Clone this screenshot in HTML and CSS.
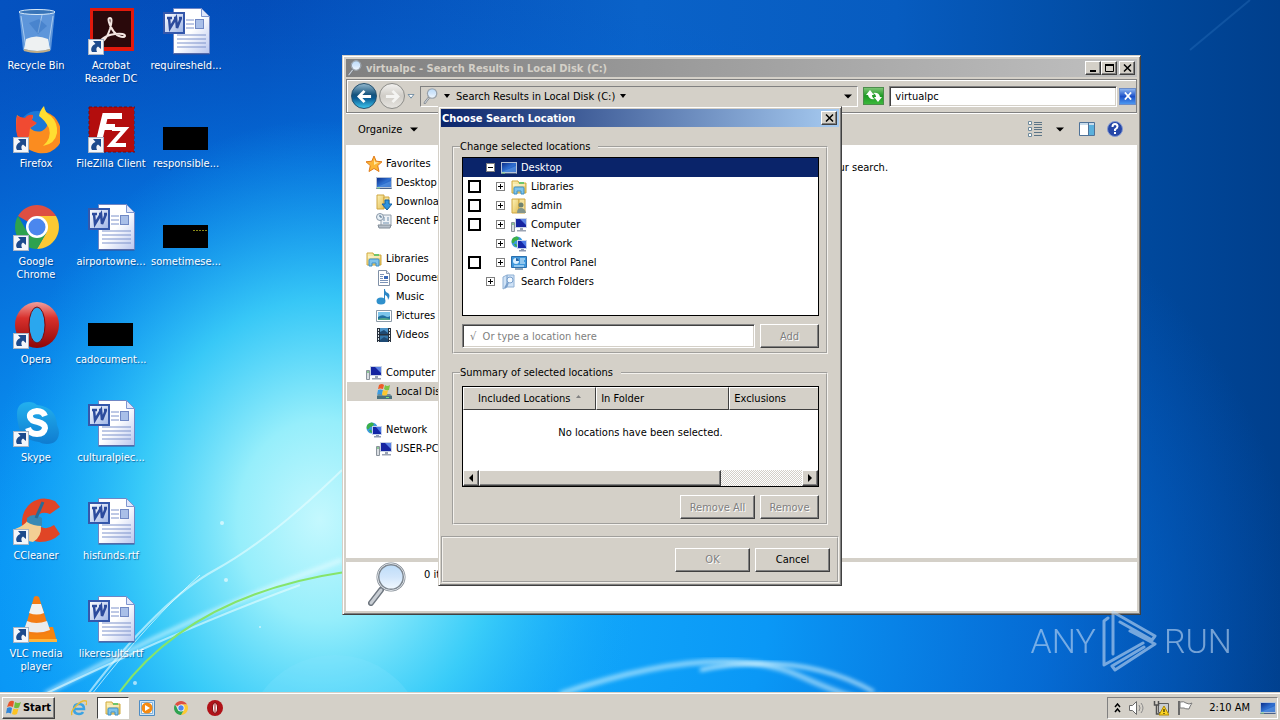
FILE: index.html
```
<!DOCTYPE html>
<html lang="en">
<head>
  <meta charset="UTF-8">
  <title>Desktop</title>
  <link rel="stylesheet" href="styles.css">
</head>

<body>

<!-- shared icons -->
<svg class="defs" aria-hidden="true">
  <defs>
    <linearGradient id="gPaper" x1="0" y1="0" x2="1" y2="1"><stop offset="0.5" stop-color="#fff"/><stop offset="1" stop-color="#b9c6ee"/></linearGradient>
    <linearGradient id="gBadge" x1="0" y1="0" x2="1" y2="1"><stop offset="0" stop-color="#fff"/><stop offset="1" stop-color="#9db4e6"/></linearGradient>
    <linearGradient id="gScreen" x1="0" y1="0" x2="1" y2="1"><stop offset="0" stop-color="#0b2f8c"/><stop offset="0.5" stop-color="#2f6fd0"/><stop offset="1" stop-color="#2354b4"/></linearGradient>
    <linearGradient id="gOpera" x1="0" y1="0" x2="0" y2="1"><stop offset="0" stop-color="#f0a09c"/><stop offset="0.35" stop-color="#d8302c"/><stop offset="1" stop-color="#8e0606"/></linearGradient>
    <linearGradient id="gFolder" x1="0" y1="0" x2="1" y2="1"><stop offset="0" stop-color="#fdf3b8"/><stop offset="1" stop-color="#e2bd55"/></linearGradient>
    <linearGradient id="gLens" x1="0" y1="0" x2="0" y2="1"><stop offset="0" stop-color="#bcdcf8"/><stop offset="0.5" stop-color="#d2e6fb"/><stop offset="1" stop-color="#f4faff"/></linearGradient>
    <linearGradient id="gSkype" x1="0" y1="0" x2="0" y2="1"><stop offset="0" stop-color="#22b0ee"/><stop offset="1" stop-color="#0f7cd0"/></linearGradient>

    <symbol id="arrow" viewBox="0 0 16 16">
      <rect x="0.5" y="0.5" width="15" height="15" fill="#f4f6fa" stroke="#a9b4c4"/>
      <path d="M5 2h8v8l-3-2.500c-2 1-2 3-1 5.500H4C2 10 4 6 7.500 5z" fill="#1d4a8c"/>
    </symbol>
    <symbol id="word" viewBox="0 0 48 48">
      <path d="M11.500 0.500h28l8 8v37h-36z" fill="url(#gPaper)" stroke="#6f86c4"/>
      <path d="M47.500 46h-36" stroke="#3c4f8f"/>
      <path d="M39.500 0.500v8h8z" fill="#dfe7fb" stroke="#7f95cf"/>
      <path d="M24 12h8M24 16h8M24 20h8M15 27h29M15 31h29M15 35h29M15 39h29" stroke="#7c92cb"/>
      <rect x="33.500" y="11.500" width="8" height="9" fill="#a9bfe8" stroke="#7088c4"/>
      <rect x="2" y="5" width="20" height="20" fill="url(#gBadge)" stroke="#3558ab" stroke-width="2"/>
      <path d="M5 10h5M12 10h3M17 10h3M7 10l1 10L14 10l1 10L19 10" fill="none" stroke="#2c4b9d" stroke-width="2.500"/>
    </symbol>
    <symbol id="chrome" viewBox="0 0 44 44">
      <path d="M22 22L3 11A22 22 0 0 1 41 11H22z" fill="#dd4f43"/>
      <path d="M22 11h19A22 22 0 0 1 22 44L31.500 27.500z" fill="#fcc934"/>
      <path d="M3 11A22 22 0 0 0 22 44L31.500 27.500 12.500 27.500z" fill="#2ea24f"/>
      <circle cx="22" cy="22" r="11" fill="#fff"/>
      <circle cx="22" cy="22" r="8.500" fill="#4b87ee"/>
    </symbol>
    <symbol id="opera" viewBox="0 0 44 46">
      <ellipse cx="22" cy="23" rx="22" ry="23" fill="url(#gOpera)"/>
      <ellipse cx="22" cy="23" rx="8" ry="18" fill="#2aa7ee" stroke="#7c0a0a"/>
    </symbol>
    <symbol id="opera-s" viewBox="0 0 16 16">
      <circle cx="8" cy="8" r="8" fill="#b01218"/>
      <ellipse cx="8" cy="8" rx="2.500" ry="5.500" fill="#fff" stroke="#7c0a0a"/>
      <path d="M8 3v10" stroke="#a01014"/>
    </symbol>
    <symbol id="screen" viewBox="0 0 16 16">
      <path d="M0 2h16v12H0z" fill="#b6c3d8"/>
      <path d="M1 3h14v9H1z" fill="url(#gScreen)"/>
      <path d="M1 12L15 6v6z" fill="#5f9be6" opacity="0.600"/>
      <path d="M0.500 13.500h15" stroke="#4c6186"/>
      <path d="M1 13h3" stroke="#8ee08a"/>
    </symbol>
    <symbol id="library" viewBox="0 0 16 16">
      <path d="M1 2h6l1 2h7v10H1z" fill="url(#gFolder)" stroke="#d0a93f"/>
      <path d="M8 3h5v2H8z" fill="#6fc56a"/>
      <path d="M2 6h12" stroke="#fffbe0"/>
      <path d="M3 15V9q0-1 1-1h8q1 0 1 1v6h-3v-3H6v3z" fill="#7fc3ea" stroke="#3f8fc6"/>
    </symbol>
    <symbol id="download" viewBox="0 0 16 16">
      <path d="M1 1h7v14H1z" fill="url(#gFolder)" stroke="#cfa640"/>
      <path d="M8 3h5v11H8z" fill="#f4e094" stroke="#cfa640"/>
      <path d="M9 6h4v4h3l-5 6-5-6h3z" fill="#2f94dd" stroke="#1462a6"/>
    </symbol>
    <symbol id="recent" viewBox="0 0 16 16">
      <path d="M5 2h10v11H5z" fill="#eef2f6" stroke="#93a0ad"/>
      <path d="M7 5h2M11 5h2M7 7h2M11 7h2M7 10h6" stroke="#6f8fae"/>
      <path d="M2 12h13l-1 3H3z" fill="#b7c0ca" stroke="#828d98"/>
      <circle cx="4" cy="4" r="3.500" fill="#e8f0f6" stroke="#8896a6"/>
      <path d="M4 2v2h2" fill="none" stroke="#4c6a86"/>
    </symbol>
    <symbol id="docs" viewBox="0 0 16 16">
      <path d="M2.500 0.500h8l3 3v12h-11z" fill="#fff" stroke="#8090a6"/>
      <path d="M10.500 0.500v3h3" fill="#dde6f4" stroke="#8090a6"/>
      <path d="M4 4.500h4M4 6.500h3M4 8.500h3M4 10.500h8M4 12.500h8" stroke="#7b93b8"/>
      <path d="M8 6h4v3H8z" fill="#3869b8"/>
    </symbol>
    <symbol id="music" viewBox="0 0 16 16">
      <ellipse cx="5" cy="12" rx="4.500" ry="3.500" fill="#2f90cc"/>
      <path d="M8 12V0h1q0 3 3 4 3 2 0 7 0-4-3-5v6z" fill="#2c86c6"/>
    </symbol>
    <symbol id="picture" viewBox="0 0 16 16">
      <path d="M0.500 2.500h15v11H0.500z" fill="#fff" stroke="#8b9aa8"/>
      <path d="M2 4h12v8H2z" fill="#7cc5ea"/>
      <path d="M2 9q4-3 7-1t5 0v4H2z" fill="#216fa0"/>
      <path d="M2 11q6-2 12 0v1H2z" fill="#54a58a"/>
    </symbol>
    <symbol id="video" viewBox="0 0 16 16">
      <path d="M1 1h14v14H1z" fill="#26303c"/>
      <path d="M4 1h8v6H4z" fill="#4d93c8"/><path d="M4 8.500h8V15H4z" fill="#3577aa"/>
      <path d="M4 5l4-2 4 3v1H4zM4 13l4-3 4 2v3H4z" fill="#1d4a74"/>
      <path d="M2.500 2v13M13.500 2v13" stroke="#dfe6ec" stroke-dasharray="2 1"/>
    </symbol>
    <symbol id="computer" viewBox="0 0 16 16">
      <path d="M0.500 5.500h3v9h-3z" fill="#d9dde2" stroke="#8b939c"/>
      <path d="M1 7h2" stroke="#3fae4a"/>
      <path d="M4 1h12v10H4z" fill="#c8d2e4"/>
      <path d="M5 2h10v8H5z" fill="#1524a0"/>
      <path d="M9 2h6v6z" fill="#5b82e4"/>
      <path d="M9 11h3v2H9zM6 13h9v1.500H6z" fill="#9ba4b4"/>
    </symbol>
    <symbol id="network" viewBox="0 0 16 16">
      <circle cx="6" cy="6" r="5.500" fill="#3b9ae0"/>
      <path d="M2 2q4-3 6 0-1 3-4 3-1 3-3 2Q0 4 2 2zM3 8q3-1 3 3-2 0-3-3z" fill="#3cb04a"/>
      <path d="M6 4h10v9H6z" fill="#c5d2ee"/><path d="M7 5h8v7H7z" fill="#1428a8"/>
      <path d="M10 5h5v6z" fill="#4a78e6"/><path d="M10 13h3v1h2v1.500H8V14h2z" fill="#8e9ab4"/>
    </symbol>
    <symbol id="user" viewBox="0 0 16 16">
      <path d="M1 1h7v14H1z" fill="url(#gFolder)" stroke="#cfa640"/>
      <path d="M8 1h6v14H8z" fill="#f5e29a" stroke="#cfa640"/>
      <circle cx="10" cy="7" r="2.500" fill="#6f8270"/><path d="M6 15q0-5 4-5t5 5z" fill="#83958c"/>
    </symbol>
    <symbol id="panel" viewBox="0 0 16 16">
      <path d="M0.500 1.500h15v11h-15z" fill="#3f98dc" stroke="#2a6fae"/>
      <circle cx="5" cy="6" r="3" fill="#d9efff"/><path d="M5 6V3a3 3 0 0 1 3 3z" fill="#2466a8"/>
      <path d="M9 4h5M9 6h4M9 8h5M3 11h10" stroke="#e8f6ff"/>
      <path d="M4 13h8v2H4z" fill="#8ea4b8"/>
    </symbol>
    <symbol id="searchf" viewBox="0 0 16 16">
      <path d="M2 3l4-2v12l-4 2zM6 1h7v12H6z" fill="#cfe2f6" stroke="#8fb0d4"/>
      <circle cx="9" cy="6" r="3" fill="#f2f9ff" stroke="#7aa0cc"/>
      <path d="M7 9l-3 5" stroke="#7aa0cc" stroke-width="2"/>
    </symbol>
    <symbol id="disk" viewBox="0 0 16 16">
      <path d="M2 10h12l2 2v3H1v-3z" fill="#6d8c98"/><path d="M1 12h15v3H1z" fill="#48707e"/>
      <path d="M3 1q3-2 5 0L7 5Q4 4 2 5z" fill="#ee5b27"/><path d="M9 1q2 2 5 0l-1 5q-3 1-5-1z" fill="#7cc343"/>
      <path d="M2 6q2-1 5 0l-1 5q-3-2-5 0z" fill="#3b9be0"/><path d="M7 6q3 1 5 0l-1 5q-2 1-5 0z" fill="#fcc62e"/>
      <path d="M10 13.500h3" stroke="#7be07b"/>
    </symbol>
    <symbol id="star" viewBox="0 0 16 16">
      <path d="M8 0l2.200 5.200L16 5.800l-4.300 3.800L13 15.500 8 12.500l-5 3 1.300-5.900L0 5.800l5.800-.6z" fill="#fcb535" stroke="#e07c1c"/>
      <path d="M8 3l1.300 3.300H13L8 9z" fill="#ffe9a6"/>
    </symbol>
    <symbol id="lens" viewBox="0 0 40 44">
      <path d="M13 28L3 41" stroke="#6f7780" stroke-width="6" stroke-linecap="round"/>
      <path d="M13 28L3 41" stroke="#c9ced4" stroke-width="3" stroke-linecap="round"/>
      <circle cx="23" cy="15" r="13" fill="url(#gLens)" stroke="#7d868f" stroke-width="3"/>
      <circle cx="23" cy="15" r="13.500" fill="none" stroke="#dfe3e8"/>
    </symbol>
    <symbol id="flagwin" viewBox="0 0 16 16">
      <path d="M3 2q3-2 5-0.500L7 7Q4 5.500 1 7z" fill="#e8552a"/>
      <path d="M9 2q3 2 6 0l-2 5.500q-3 1.500-5 0z" fill="#74bd3c"/>
      <path d="M1 8q3-1.500 5 0l-1 5.500q-3-1.500-5 0z" fill="#2f86d8"/>
      <path d="M7.500 8.500q3 1.500 5 0L11 14q-2.500 1.500-5 0z" fill="#fcc322"/>
    </symbol>
  </defs>
</svg>

<div class="desktop">

  <svg class="wallpaper" viewBox="0 0 1280 720" preserveAspectRatio="none" aria-hidden="true">
    <defs>
      <linearGradient id="wBase" x1="0" y1="0" x2="1" y2="0">
        <stop offset="0" stop-color="#0452c0"/><stop offset="0.2" stop-color="#034cb8"/>
        <stop offset="0.5" stop-color="#0a62c8"/><stop offset="0.7" stop-color="#075cc0"/>
        <stop offset="0.9" stop-color="#00489c"/><stop offset="1" stop-color="#003f8c"/>
      </linearGradient>
      <radialGradient id="wBlue" gradientUnits="userSpaceOnUse" cx="0" cy="0" r="1" gradientTransform="translate(380 620) scale(920 640)">
        <stop offset="0" stop-color="#18b4ff"/><stop offset="0.42" stop-color="#0a98f6"/>
        <stop offset="0.72" stop-color="#0672de" stop-opacity="0.800"/><stop offset="1" stop-color="#0560d0" stop-opacity="0"/>
      </radialGradient>
      <radialGradient id="wGlow" gradientUnits="userSpaceOnUse" cx="0" cy="0" r="1" gradientTransform="translate(320 520) scale(330 400)">
        <stop offset="0" stop-color="#c4f8fe"/><stop offset="0.25" stop-color="#96eefb"/>
        <stop offset="0.55" stop-color="#40d2f8" stop-opacity="0.850"/><stop offset="1" stop-color="#12a4f6" stop-opacity="0"/>
      </radialGradient>
      <filter id="soft"><feGaussianBlur stdDeviation="2"/></filter>
    </defs>
    <rect width="1280" height="720" fill="url(#wBase)"/>
    <rect width="1280" height="720" fill="url(#wBlue)"/>
    <rect width="1280" height="720" fill="url(#wGlow)"/>
    <circle cx="335" cy="745" r="90" fill="#8ae6ff" opacity="0.200"/>
    <g fill="none" stroke="#e8fdff">
      <path d="M45 694Q190 615 342 560" stroke-width="4" opacity="0.700" filter="url(#soft)"/>
      <path d="M45 694Q190 625 300 585" stroke-width="2" opacity="0.600"/>
      <path d="M88 694Q160 600 215 570T342 470" stroke-width="2" opacity="0.600"/>
      <path d="M92 694Q150 620 200 575" stroke-width="1" opacity="0.700"/>
      <path d="M560 694Q720 640 800 676T880 694" stroke-width="5" opacity="0.600" filter="url(#soft)"/>
      <path d="M700 670Q800 650 874 692" stroke-width="3" opacity="0.900" filter="url(#soft)"/>
      <path d="M1190 50L1250 0" stroke="#3f86d0" stroke-width="2" opacity="0.250"/>
    </g>
    <path d="M118 694Q190 595 345 572" fill="none" stroke="#86e46a" stroke-width="2"/>
    <g fill="#fff" opacity="0.600">
      <circle cx="222" cy="523" r="2"/><circle cx="226" cy="580" r="2"/><circle cx="135" cy="683" r="2"/><circle cx="260" cy="627" r="1"/>
    </g>
  </svg>

  <div class="shortcuts">
    <a class="shortcut" href="#">
      <svg viewBox="0 0 48 48"><path d="M7 3h36l-4 39q-14 5-28 0z" fill="#a8cdf0" opacity="0.550"/><path d="M14 31q10-5 22 0l2 10q-12 4-26 0z" fill="#eef1f2"/><path d="M12 42q13 4 26 0" stroke="#c3ae86" stroke-width="2" fill="none"/><ellipse cx="25" cy="4" rx="18" ry="2.500" fill="#3874b8" stroke="#d9ebfa"/><path d="M9 8l5 32M41 8l-5 32M30 7l-4 18" stroke="#d8ecfc" opacity="0.600"/><path d="M17 15l10-4 8 7-9 8z" fill="#2d6cbc" opacity="0.400"/></svg>
      <span>Recycle Bin</span></a>
    <a class="shortcut" href="#">
      <svg viewBox="0 0 48 48"><path d="M3 0h44v43H3z" fill="#e1190c"/><path d="M6 3h38v36H6z" fill="#2a090b"/><path d="M23 10q-3 0 0 7 4 9 9 11 5 2 6 0 0-3-10-2-9 1-14 6-1 3 2 1 4-3 7-12 3-11 0-11z" fill="none" stroke="#f4e6e2" stroke-width="2"/><use href="#arrow" x="1" y="31" width="16" height="16"/></svg>
      <span>Acrobat Reader DC</span></a>
    <a class="shortcut" href="#"><svg><use href="#word"/></svg><span>requiresheld...</span></a>

    <a class="shortcut" href="#">
      <svg viewBox="0 0 48 48"><circle cx="25" cy="23" r="18" fill="#1a78d8"/><path d="M5 9q3 3 8 4 3-4 8-4 0 4-2 5 5 2 5 4l-6 4q5 5 12 3 6-3 6-10l-2-9q9 3 13 12 6 14-1 22-8 9-20 7Q9 43 5 27 3 17 5 9z" fill="#fb8c1f"/><path d="M5 10q3 1 8 2 3-4 8-3l-1 5 5 3-7 5-1 8-8 7Q2 29 5 10z" fill="#f04a32"/><path d="M32 0q1 7 7 10 7 7 6 17-2 11-14 13 9-8 6-18-5-9-10-12 1-6 5-10z" fill="#ffdd31"/><use href="#arrow" x="1" y="31" width="16" height="16"/></svg>
      <span>Firefox</span></a>
    <a class="shortcut" href="#">
      <svg viewBox="0 0 48 48"><path d="M2 1h45v45H2z" fill="#b30d0d"/><path d="M2 1h46v45H2z" fill="none" stroke="#7e0808" stroke-dasharray="3 2"/><path d="M12 35L18 10h17M15 21h13" fill="none" stroke="#fff" stroke-width="6"/><path d="M25 23h13L24 39h15" fill="none" stroke="#fff" stroke-width="4"/><use href="#arrow" x="1" y="31" width="16" height="16"/></svg>
      <span>FileZilla Client</span></a>
    <a class="shortcut" href="#"><svg viewBox="0 0 48 48"><path d="M1 21h45v23H1z"/></svg><span>responsible...</span></a>

    <a class="shortcut" href="#">
      <svg viewBox="0 0 48 48"><use href="#chrome" x="3" y="1" width="44" height="44"/><use href="#arrow" x="1" y="31" width="16" height="16"/></svg>
      <span>Google Chrome</span></a>
    <a class="shortcut" href="#"><svg><use href="#word"/></svg><span>airportowne...</span></a>
    <a class="shortcut" href="#"><svg viewBox="0 0 48 48"><path d="M1 21h45v23H1z"/><path d="M31 26.500h14" stroke="#8a8a18" stroke-dasharray="2 1"/></svg><span>sometimese...</span></a>

    <a class="shortcut" href="#">
      <svg viewBox="0 0 48 48"><use href="#opera" x="3" y="0" width="44" height="46"/><use href="#arrow" x="1" y="31" width="16" height="16"/></svg>
      <span>Opera</span></a>
    <a class="shortcut" href="#"><svg viewBox="0 0 48 48"><path d="M1 21h45v23H1z"/></svg><span>cadocument...</span></a>
    <i></i>

    <a class="shortcut" href="#">
      <svg viewBox="0 0 48 48"><path d="M5 14Q5 2 17 2q5 0 8 3 19 2 20 20 2 4 2 8-1 11-12 11-5 0-8-2Q8 40 6 23q-1-4-1-9z" fill="url(#gSkype)"/><path d="M33 16q-2-5-8-5-8 1-7 6 1 4 8 5 7 2 7 6-1 6-8 6-7 0-9-6" fill="none" stroke="#fff" stroke-width="6"/><use href="#arrow" x="1" y="31" width="16" height="16"/></svg>
      <span>Skype</span></a>
    <a class="shortcut" href="#"><svg><use href="#word"/></svg><span>culturalpiec...</span></a>
    <i></i>

    <a class="shortcut" href="#">
      <svg viewBox="0 0 48 48"><path d="M48 9L43 3Q30-3 19 5 9 13 10 28q3 15 18 16 12 0 20-8l-6-9q-7 5-13 2-6-3-4-9 3-8 13-4z" fill="#e04526"/><path d="M3 31q9-3 13-9l13 5q1 12-8 17-10-1-18-13z" fill="#f3cf94"/><path d="M15 20q6-6 15 0v8q-9 0-15-4z" fill="#3889b4"/><path d="M24 20l7-16" stroke="#2a6b94" stroke-width="3"/><use href="#arrow" x="1" y="31" width="16" height="16"/></svg>
      <span>CCleaner</span></a>
    <a class="shortcut" href="#"><svg><use href="#word"/></svg><span>hisfunds.rtf</span></a>
    <i></i>

    <a class="shortcut" href="#">
      <svg viewBox="0 0 48 48"><path d="M10 31h31l4 15H9z" fill="#f58410"/><path d="M9 46h36v-3H10z" fill="#ffb53c"/><path d="M22 1q2-2 5 0l11 35q-13 6-26 0z" fill="#f47d15"/><path d="M20 8h9l3 9q-7 3-15 0z" fill="#f2f2f2"/><path d="M15 25q9 4 20 0l3 9q-13 5-26 0z" fill="#ececec"/><use href="#arrow" x="1" y="31" width="16" height="16"/></svg>
      <span>VLC media player</span></a>
    <a class="shortcut" href="#"><svg><use href="#word"/></svg><span>likeresults.rtf</span></a>
  </div>

  <!-- explorer window -->
  <section class="window explorer">
    <header class="titlebar inactive">
      <svg class="icon"><use href="#lens"/></svg>
      <h1>virtualpc - Search Results in Local Disk (C:)</h1>
      <button class="bevel caption" aria-label="Minimize"><svg viewBox="0 0 9 8"><path d="M1 7h6" stroke="#000" stroke-width="2"/></svg></button>
      <button class="bevel caption" aria-label="Maximize"><svg viewBox="0 0 9 8"><path d="M0.500 0v7.500h8V0" fill="none" stroke="#000"/><path d="M0 1h9" stroke="#000" stroke-width="2"/></svg></button>
      <button class="bevel caption close" aria-label="Close"><svg viewBox="0 0 9 8"><path d="M1 0.500l7 7M8 0.500L1 7.500" stroke="#000" stroke-width="1.500"/></svg></button>
    </header>

    <nav class="navbar">
      <button class="round back" aria-label="Back"><svg viewBox="0 0 16 16"><path d="M15 8H3M8 2L2 8l6 6" fill="none" stroke="#fff" stroke-width="3"/></svg></button>
      <button class="round forward" aria-label="Forward"><svg viewBox="0 0 16 16"><path d="M1 8h12M8 2l6 6-6 6" fill="none" stroke="#f4f4f2" stroke-width="3"/></svg></button>
      <button class="plain" aria-label="Recent pages"><svg class="caret" viewBox="0 0 8 6"><path d="M0.500 0.500h7L4 5z" fill="#fff" stroke="#5c7c96"/></svg></button>
      <div class="address">
        <svg class="icon"><use href="#lens"/></svg>
        <svg class="caret small" viewBox="0 0 7 4"><path d="M0 0h6L3 4z"/></svg>
        <a href="#">Search Results in Local Disk (C:)</a>
        <svg class="caret small" viewBox="0 0 7 4"><path d="M0 0h6L3 4z"/></svg>
        <button class="plain drop" aria-label="Previous locations"><svg class="caret" viewBox="0 0 8 4"><path d="M0 0h8L4 4z"/></svg></button>
      </div>
      <button class="refresh" aria-label="Refresh"><svg viewBox="0 0 18 16"><path d="M1 7l4-5 4 5H7q0 3 3 4-6 1-7-4zM17 9l-4 5-4-5h2q0-3-3-4 6-1 7 4z" fill="#fff"/></svg></button>
      <input class="sunken query" type="text" value="virtualpc" aria-label="Search">
      <button class="clear" aria-label="Clear search"><svg viewBox="0 0 9 8"><path d="M1 0l7 8M8 0L1 8" stroke="#fff" stroke-width="2"/></svg></button>
    </nav>

    <div class="toolbar">
      <button class="plain organize">Organize <svg class="caret" viewBox="0 0 8 4"><path d="M0 0h8L4 4z"/></svg></button>
      <button class="plain" aria-label="Change view"><svg class="icon" viewBox="0 0 16 16"><path d="M1.500 0.500h3v3h-3zM1.500 6.500h3v3h-3zM1.500 12.500h3v3h-3z" fill="#fff" stroke="#6e8a9c"/><path d="M7 1.500h8M7 3.500h8M7 6.500h8M7 8.500h8M7 11.500h8M7 14.500h8" stroke="#5c7486"/></svg></button>
      <button class="plain more" aria-label="More view options"><svg class="caret" viewBox="0 0 8 4"><path d="M0 0h8L4 4z"/></svg></button>
      <button class="plain preview" aria-label="Preview pane"><svg class="icon" viewBox="0 0 16 16"><path d="M0.500 1.500h15v13h-15z" fill="#fff" stroke="#4f7298"/><path d="M1 2h14v2H1z" fill="#c8dcec"/><path d="M10 4h5v10h-5z" fill="#5ab0dc"/><path d="M9.500 2v12" stroke="#4f7298"/></svg></button>
      <button class="plain" aria-label="Help"><svg class="icon" viewBox="0 0 16 16"><circle cx="8" cy="8" r="7.500" fill="#2647a8" stroke="#8298d0"/><path d="M5.500 6q0-3 2.500-3t2.500 2.500Q10.500 7 8 8.500V10M8 11v2" fill="none" stroke="#fff" stroke-width="2"/></svg></button>
    </div>

    <div class="content">
      <nav class="sidebar">
        <ul>
          <li class="head"><a href="#"><svg class="icon"><use href="#star"/></svg>Favorites</a></li>
          <li><a href="#"><svg class="icon"><use href="#screen"/></svg>Desktop</a></li>
          <li><a href="#"><svg class="icon"><use href="#download"/></svg>Downloads</a></li>
          <li><a href="#"><svg class="icon"><use href="#recent"/></svg>Recent Places</a></li>
        </ul>
        <ul>
          <li class="head"><a href="#"><svg class="icon"><use href="#library"/></svg>Libraries</a></li>
          <li><a href="#"><svg class="icon"><use href="#docs"/></svg>Documents</a></li>
          <li><a href="#"><svg class="icon"><use href="#music"/></svg>Music</a></li>
          <li><a href="#"><svg class="icon"><use href="#picture"/></svg>Pictures</a></li>
          <li><a href="#"><svg class="icon"><use href="#video"/></svg>Videos</a></li>
        </ul>
        <ul>
          <li class="head"><a href="#"><svg class="icon"><use href="#computer"/></svg>Computer</a></li>
          <li class="current"><a href="#"><svg class="icon"><use href="#disk"/></svg>Local Disk (C:)</a></li>
        </ul>
        <ul>
          <li class="head"><a href="#"><svg class="icon"><use href="#network"/></svg>Network</a></li>
          <li><a href="#"><svg class="icon"><use href="#computer"/></svg>USER-PC</a></li>
        </ul>
      </nav>
      <main class="results">No items match your search.</main>
    </div>

    <footer class="details">
      <svg class="big-lens"><use href="#lens"/></svg>
      <span>0 items</span>
    </footer>
  </section>

  <!-- search location dialog -->
  <section class="window dialog" role="dialog" aria-labelledby="dlgTitle">
    <header class="titlebar">
      <h2 id="dlgTitle">Choose Search Location</h2>
      <button class="bevel caption" aria-label="Close"><svg viewBox="0 0 9 8"><path d="M1 0.500l7 7M8 0.500L1 7.500" stroke="#000" stroke-width="1.500"/></svg></button>
    </header>

    <form class="dialog-body">
      <fieldset>
        <legend>Change selected locations</legend>
        <ul class="tree">
          <li class="selected"><span class="check"></span><button type="button" class="toggle minus" aria-label="Collapse"></button><svg class="icon"><use href="#screen"/></svg><span>Desktop</span></li>
          <li class="child"><span class="check"><input type="checkbox" id="c1"></span><button type="button" class="toggle" aria-label="Expand"></button><svg class="icon"><use href="#library"/></svg><label for="c1">Libraries</label></li>
          <li class="child"><span class="check"><input type="checkbox" id="c2"></span><button type="button" class="toggle" aria-label="Expand"></button><svg class="icon"><use href="#user"/></svg><label for="c2">admin</label></li>
          <li class="child"><span class="check"><input type="checkbox" id="c3"></span><button type="button" class="toggle" aria-label="Expand"></button><svg class="icon"><use href="#computer"/></svg><label for="c3">Computer</label></li>
          <li class="child"><span class="check"></span><button type="button" class="toggle" aria-label="Expand"></button><svg class="icon"><use href="#network"/></svg><span>Network</span></li>
          <li class="child"><span class="check"><input type="checkbox" id="c4"></span><button type="button" class="toggle" aria-label="Expand"></button><svg class="icon"><use href="#panel"/></svg><label for="c4">Control Panel</label></li>
          <li><span class="check"></span><button type="button" class="toggle" aria-label="Expand"></button><svg class="icon"><use href="#searchf"/></svg><span>Search Folders</span></li>
        </ul>
        <div class="row">
          <input class="sunken location" type="text" placeholder="√&nbsp; Or type a location here" aria-label="Location">
          <button type="button" class="bevel btn narrow" disabled>Add</button>
        </div>
      </fieldset>

      <fieldset>
        <legend>Summary of selected locations</legend>
        <div class="summary">
          <table>
            <thead>
              <tr>
                <th class="first">Included Locations <svg class="caret small" viewBox="0 0 7 4"><path d="M1 3h5L3.500 0z" fill="#808080"/></svg></th>
                <th>In Folder</th>
                <th class="last">Exclusions</th>
              </tr>
            </thead>
            <tbody>
              <tr><td colspan="3">No locations have been selected.</td></tr>
            </tbody>
          </table>
          <div class="scrollbar">
            <button type="button" class="bevel" aria-label="Scroll left"><svg viewBox="0 0 4 8"><path d="M4 0v8L0 4z"/></svg></button>
            <div class="track"><div class="bevel thumb"></div></div>
            <button type="button" class="bevel" aria-label="Scroll right"><svg viewBox="0 0 4 8"><path d="M0 0v8l4-4z"/></svg></button>
          </div>
        </div>
        <div class="row">
          <button type="button" class="bevel btn" disabled>Remove All</button>
          <button type="button" class="bevel btn narrow" disabled>Remove</button>
        </div>
      </fieldset>

      <div class="actions">
        <button type="submit" class="bevel btn" disabled>OK</button>
        <button type="button" class="bevel btn">Cancel</button>
      </div>
    </form>
  </section>

  <div class="watermark">
    <span>ANY</span>
    <svg viewBox="0 0 60 66"><path d="M8 10L4 13V57L43 35M13 46V4L55 28L52 32L20 14M30 23L55 36L15 62L12 58L44 39" fill="none" stroke="#c2daf4" stroke-width="3" stroke-linejoin="round" stroke-linecap="round"/></svg>
    <span>RUN</span>
  </div>
</div>

<footer class="taskbar">
  <button class="bevel start"><svg><use href="#flagwin"/></svg>Start</button>
  <div class="quick">
    <button class="plain" aria-label="Internet Explorer"><svg class="icon" viewBox="0 0 16 16"><path d="M3 9h10q0-5-5-5t-5 5 5 5q3 0 4-2" fill="none" stroke="#3ba3e4" stroke-width="2.500"/><path d="M1 15q-2-3 4-9t10-5q2 1 0 4" fill="none" stroke="#e9bb32" stroke-width="1.500"/></svg></button>
    <button class="active" aria-label="Explorer"><svg class="icon"><use href="#library"/></svg></button>
    <button class="plain" aria-label="Media Player"><svg class="icon" viewBox="0 0 16 16"><path d="M0.500 0.500h15v15h-15z" fill="#cfe4f6" stroke="#4d8cc4"/><path d="M2.500 2.500h11v11h-11z" fill="#fff" stroke="#7fb2dc"/><circle cx="8" cy="8" r="5.500" fill="#f58a12"/><path d="M6 5l5 3-5 3z" fill="#fff"/></svg></button>
    <button class="plain" aria-label="Chrome"><svg class="icon" viewBox="0 0 16 16"><use href="#chrome" x="1" y="1" width="14" height="14"/></svg></button>
    <button class="plain" aria-label="Opera"><svg class="icon"><use href="#opera-s"/></svg></button>
  </div>
  <div class="tray">
    <svg class="chev" viewBox="0 0 7 10"><path d="M1 4l2.500-3L6 4M1 9l2.500-3L6 9" fill="none" stroke="#000" stroke-width="1.500"/></svg>
    <svg class="icon" viewBox="0 0 16 16"><path d="M0.500 5.500h3l4-4v13l-4-4h-3z" fill="#fff" stroke="#6a6a6a"/><path d="M10 5q2 3 0 6M12 3q4 5 0 10" fill="none" stroke="#8a8a8a"/></svg>
    <svg class="icon" viewBox="0 0 16 16"><path d="M5.500 3.500h10v9h-10z" fill="#c8ccd0" stroke="#5c5c5c"/><path d="M1.500 1v4h4V1M3.500 5v9h4" fill="none" stroke="#505050" stroke-width="1.500"/><path d="M11 6l5 9H6z" fill="#fcd423" stroke="#b28a00"/><path d="M11 9v3M11 13v1" stroke="#000"/></svg>
    <svg class="icon" viewBox="0 0 16 16"><path d="M2 1v14" stroke="#6a6a6a" stroke-width="2"/><path d="M3 2q4-1 6 1 3 2 6 0-2 3-3 6-4 0-5-1H3z" fill="#fff" stroke="#7a7a7a"/></svg>
    <time>2:10 AM</time>
    <button class="plain" aria-label="Show desktop"><svg class="icon"><use href="#screen"/></svg></button>
  </div>
</footer>

</body>
</html>
```
FILE: styles.css
```
* {
  box-sizing: border-box;
}

html,
body {
  height: 100%;
  margin: 0;
}

body {
  display: flex;
  flex-direction: column;
  overflow: hidden;
  font: 11px/13px "DejaVu Sans Condensed", "DejaVu Sans", sans-serif;
  color: #000;
}

button,
input {
  font: inherit;
  color: inherit;
  margin: 0;
}

button {
  display: flex;
  align-items: center;
  justify-content: center;
  padding: 0;
}

a {
  color: inherit;
  text-decoration: none;
}

ul {
  list-style: none;
  margin: 0;
  padding: 0;
}

h1,
h2 {
  flex: 1;
  margin: 0;
  font: bold 11px/13px "DejaVu Sans Condensed", "DejaVu Sans", sans-serif;
  white-space: nowrap;
}

.defs {
  position: absolute;
  width: 0;
  height: 0;
}

.icon {
  width: 16px;
  height: 16px;
  flex: none;
}

.caret {
  width: 8px;
  height: 5px;
  flex: none;
}

.caret.small {
  width: 7px;
  height: 4px;
}

.plain {
  background: none;
  border: 0;
}

.bevel {
  background: #d4d0c8;
  border: 1px solid;
  border-color: #fff #404040 #404040 #fff;
  box-shadow: inset -1px -1px #808080;
}

.sunken {
  background: #fff;
  border: 1px solid;
  border-color: #808080 #fff #fff #808080;
  box-shadow: inset 1px 1px #404040, inset -1px -1px #d4d0c8;
  border-radius: 0;
  outline: 0;
}

/* desktop */
.desktop {
  position: relative;
  flex: 1;
  overflow: hidden;
}

.wallpaper {
  position: absolute;
  width: 100%;
  height: 100vh;
}

.shortcuts {
  position: relative;
  display: grid;
  grid-template-columns: repeat(3, 72px);
  grid-auto-rows: 98px;
  column-gap: 3px;
}

.shortcut {
  display: flex;
  flex-direction: column;
  align-items: center;
  gap: 3px;
  padding-top: 8px;
  color: #fff;
  text-align: center;
  text-shadow: 1px 1px 1px rgba(0, 40, 100, 0.6);
}

.shortcut svg {
  width: 48px;
  height: 48px;
  flex: none;
}

/* windows */
.window {
  position: absolute;
  display: flex;
  flex-direction: column;
  padding: 2px;
  background: #d4d0c8;
  border: 1px solid;
  border-color: #d4d0c8 #404040 #404040 #d4d0c8;
  box-shadow: inset 1px 1px #fff, inset -1px -1px #808080;
}

.explorer {
  left: 342px;
  right: 139px;
  top: 55px;
  bottom: 77px;
  padding: 3px;
}

.dialog {
  left: 438px;
  right: 438px;
  top: 106px;
}

.titlebar {
  display: flex;
  align-items: center;
  height: 18px;
  padding: 0 2px 0 1px;
  background: linear-gradient(90deg, #0a246a, #a6caf0);
  color: #fff;
  flex: none;
}

.titlebar.inactive {
  background: linear-gradient(90deg, #808080, #c0c0c0);
  color: #d4d0c8;
}

.titlebar .icon {
  margin-right: 3px;
}

.caption {
  width: 16px;
  height: 14px;
}

.caption.close {
  margin-left: 2px;
}

.caption svg {
  width: 9px;
  height: 8px;
}

/* explorer */
.navbar {
  display: flex;
  align-items: center;
  height: 34px;
  margin-top: 2px;
  padding: 0 0 0 4px;
  border: 1px solid #808080;
  box-shadow: inset 1px 1px #fff, 0 1px #fff;
  flex: none;
}

.round {
  width: 26px;
  height: 26px;
  border-radius: 50%;
  margin-right: 2px;
  flex: none;
}

.round svg {
  width: 15px;
  height: 15px;
}

.back {
  background: linear-gradient(#8fb6cc, #14527c 45%, #0c5c94 60%, #3cc4ec);
  border: 1px solid #24506e;
}

.forward {
  background: linear-gradient(#f2f1ef, #cfccc6 50%, #e6e4e0);
  border: 1px solid #8c8c88;
}

.address {
  display: flex;
  align-items: center;
  flex: 1;
  height: 21px;
  margin-left: 5px;
  padding: 0 5px 0 2px;
  gap: 5px;
  border: 1px solid;
  border-color: #808080 #fff #fff #808080;
}

.address .drop {
  margin-left: auto;
}

.refresh {
  width: 21px;
  height: 18px;
  margin: 0 5px;
  background: linear-gradient(#7cc474, #1d9a24 50%, #3cb83c);
  border: 1px solid #4c8c4c;
}

.refresh svg {
  width: 18px;
  height: 16px;
}

.query {
  width: 29%;
  height: 21px;
  padding: 0 5px;
}

.clear {
  width: 17px;
  height: 17px;
  margin-left: 2px;
  background: linear-gradient(#8cb4f0, #1c50c8 50%, #4c98f0);
  border: 1px solid #6c8cc8;
}

.clear svg {
  width: 8px;
  height: 8px;
}

.toolbar {
  display: flex;
  align-items: center;
  height: 32px;
  padding: 0 14px 0 12px;
  flex: none;
}

.organize {
  gap: 8px;
  margin-right: auto;
}

.more {
  margin: 0 15px 0 13px;
}

.preview {
  margin-right: 12px;
}

.content {
  display: flex;
  flex: 1;
  min-height: 0;
  background: #fff;
}

.sidebar {
  width: 156px;
  padding: 9px 0 0 1px;
  white-space: nowrap;
  overflow: hidden;
  flex: none;
}

.sidebar ul {
  margin-bottom: 19px;
}

.sidebar a {
  display: flex;
  align-items: center;
  gap: 4px;
  height: 19px;
  padding-left: 29px;
}

.sidebar .head a {
  padding-left: 19px;
}

.sidebar .current {
  background: #d4d0c8;
}

.results {
  flex: 1;
  padding: 16px 6px 0 0;
  text-align: center;
}

.details {
  display: flex;
  gap: 16px;
  height: 53px;
  padding: 0 22px;
  background: #fff;
  border-top: 4px solid #d4d0c8;
  flex: none;
}

.details span {
  padding-top: 6px;
}

.big-lens {
  width: 40px;
  height: 44px;
}

/* dialog */
.dialog-body {
  padding-top: 13px;
}

fieldset {
  min-width: 0;
  margin: 0 11px 12px;
  padding: 4px 7px 4px 8px;
  border: 2px groove #f4f2ee;
}

legend {
  margin-left: -2px;
  padding: 0 8px 0 0;
}

.tree {
  height: 159px;
  background: #fff;
  border: 1px solid #000;
}

.tree li {
  display: flex;
  align-items: center;
  height: 19px;
}

.tree .check {
  display: flex;
  width: 22px;
  padding-left: 5px;
}

.tree .selected {
  background: #0a246a;
  color: #fff;
}

.tree .child .toggle {
  margin-left: 11px;
}

.tree .icon {
  margin: 0 4px 0 6px;
}

.tree input {
  appearance: none;
  width: 13px;
  height: 13px;
  background: #fff;
  border: 2px solid #000;
}

/* plus / minus boxes */
.toggle {
  width: 9px;
  height: 9px;
  margin-left: 1px;
  border: 1px solid #808080;
  background:
    linear-gradient(#000, #000) center / 5px 1px no-repeat,
    linear-gradient(#000, #000) center / 1px 5px no-repeat,
    #fff;
}

.toggle.minus {
  background: linear-gradient(#000, #000) center / 5px 1px no-repeat, #fff;
}

.row {
  display: flex;
  justify-content: flex-end;
  gap: 5px;
  margin-top: 8px;
}

.location {
  flex: 1;
  min-width: 0;
  padding: 0 7px;
}

.location::placeholder {
  color: #808080;
  opacity: 1;
}

.btn {
  width: 75px;
  height: 24px;
}

.btn.narrow {
  width: 59px;
}

.btn:disabled {
  color: #808080;
  text-shadow: 1px 1px #fff;
}

.summary {
  display: flex;
  flex-direction: column;
  height: 101px;
  margin-top: 3px;
  background: #fff;
  border: 1px solid #000;
}

.summary table {
  width: 100%;
  table-layout: fixed;
  border-collapse: separate;
  border-spacing: 0;
}

.summary th {
  height: 23px;
  padding: 0 4px;
  background: #d4d0c8;
  border: 1px solid;
  border-color: #fff #404040 #404040 #fff;
  font-weight: normal;
  text-align: left;
  white-space: nowrap;
}

.summary .first {
  padding-left: 14px;
}

.summary .caret {
  margin: 0 0 3px 1px;
}

.summary .last {
  width: 25%;
  border-right: 0;
}

.summary td {
  padding: 16px 0 0;
  text-align: center;
}

.scrollbar {
  display: flex;
  height: 16px;
  margin-top: auto;
}

.scrollbar button {
  width: 16px;
}

.scrollbar svg {
  width: 4px;
  height: 8px;
}

.track {
  flex: 1;
  background: repeating-conic-gradient(#fff 0 25%, #d4d0c8 0 50%) 0 0 / 2px 2px;
}

.thumb {
  width: 75%;
  height: 100%;
}

.actions {
  display: flex;
  justify-content: flex-end;
  align-items: center;
  gap: 5px;
  height: 47px;
  padding: 0 7px;
  margin-top: -1px;
  border: 2px groove #f4f2ee;
}

/* watermark */
.watermark {
  position: absolute;
  right: 48px;
  bottom: 18px;
  display: flex;
  align-items: center;
  gap: 4px;
  color: #c2daf4;
  font: 300 34px/44px "Roboto", sans-serif;
  opacity: 0.6;
}

.watermark svg {
  width: 60px;
  height: 66px;
}

/* taskbar */
.taskbar {
  display: flex;
  align-items: center;
  height: 28px;
  padding: 2px 2px 0;
  background: #d4d0c8;
  border-top: 1px solid #d4d0c8;
  box-shadow: inset 0 1px #fff;
  flex: none;
}

.start {
  width: 53px;
  height: 22px;
  gap: 1px;
  font-weight: bold;
}

.start svg {
  width: 16px;
  height: 16px;
}

.quick {
  display: flex;
  align-items: center;
  gap: 2px;
  margin-left: 8px;
}

.quick button {
  width: 32px;
  height: 22px;
}

.quick .active {
  background: #fff;
  border: 1px solid;
  border-color: #404040 #fff #fff #404040;
}

.tray {
  display: flex;
  align-items: center;
  gap: 8px;
  height: 22px;
  margin-left: auto;
  padding: 0 1px 0 6px;
  border: 1px solid;
  border-color: #808080 #fff #fff #808080;
}

.tray time {
  margin: 0 2px 0 8px;
}

.chev {
  width: 7px;
  height: 10px;
}
```
